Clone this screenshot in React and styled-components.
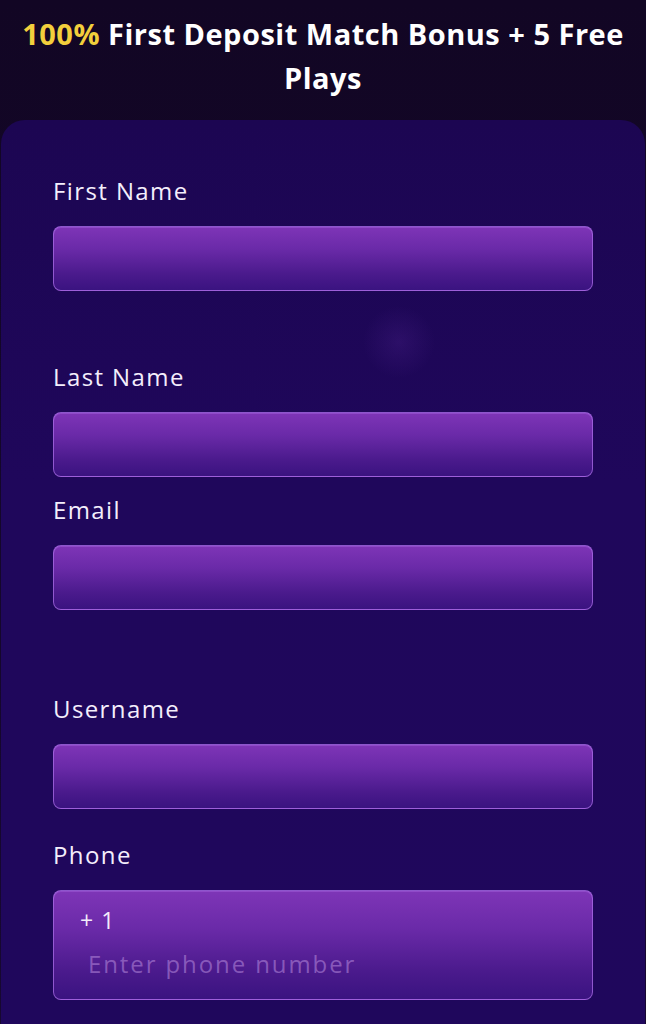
import React from "react";
import styled, { createGlobalStyle } from "styled-components";

const Global = createGlobalStyle`
  html, body { margin: 0; padding: 0; background: #130727; }
  body { font-family: "Open Sans", "Noto Sans", sans-serif; -webkit-font-smoothing: antialiased; }
  * { box-sizing: border-box; }
`;

const Page = styled.div`
  width: 646px;
  height: 1024px;
  overflow: hidden;
  background: linear-gradient(180deg, #120624 0%, #170831 100%);
  display: flex;
  flex-direction: column;
`;

const Heading = styled.h1`
  margin: 0;
  padding: 12px 10px 0;
  height: 120px;
  text-align: center;
  color: #ffffff;
  font-family: "Open Sans", sans-serif;
  font-weight: 700;
  font-size: 29px;
  line-height: 44px;
  letter-spacing: 0.5px;
`;

const Accent = styled.span`
  color: #f2cf3c;
`;

const Card = styled.section`
  flex: 1;
  margin: 0 1px;
  border-radius: 24px 24px 0 0;
  background:
    radial-gradient(circle at 398px 222px, rgba(120, 60, 190, 0.16) 0, rgba(120, 60, 190, 0) 36px),
    linear-gradient(180deg, #1c0652 0%, #1f075b 40%, #1f075c 100%);
  padding: 54px 52px 0 52px;
  display: flex;
  flex-direction: column;
`;

const Field = styled.div`
  display: flex;
  flex-direction: column;
  margin-bottom: ${(p) => p.$after}px;
`;

const Label = styled.label`
  color: #f4eefc;
  font-family: "Open Sans", sans-serif;
  font-weight: 500;
  font-size: 24px;
  line-height: 33px;
  letter-spacing: 1.4px;
  margin-bottom: 19px;
`;

const InputBox = styled.div`
  height: ${(p) => p.$h}px;
  border-radius: 8px;
  border: 1px solid rgba(170, 110, 230, 0.75);
  background: linear-gradient(180deg, #7e35b7 0%, #6a2aa8 35%, #4a1a8c 75%, #3a1380 100%);
  box-shadow: inset 0 1px 0 rgba(200, 140, 255, 0.25);
  display: flex;
  flex-direction: column;
  justify-content: center;
  padding: 0 26px;
`;

const Prefix = styled.span`
  color: #f3ecfb;
  font-size: 23px;
  line-height: 32px;
  letter-spacing: 1px;
  margin-bottom: 12px;
`;

const Placeholder = styled.span`
  color: rgba(175, 130, 215, 0.6);
  font-size: 24px;
  line-height: 32px;
  padding-left: 8px;
  letter-spacing: 1.9px;
  margin-bottom: 6px;
`;

const fields = [
  { label: "First Name", after: 69 },
  { label: "Last Name", after: 16 },
  { label: "Email", after: 82 },
  { label: "Username", after: 29 },
];

export default function App() {
  return (
    <Page>
      <Global />
      <Heading>
        <Accent>100%</Accent> First Deposit Match Bonus + 5 Free Plays
      </Heading>
      <Card>
        {fields.map((f) => (
          <Field key={f.label} $after={f.after}>
            <Label>{f.label}</Label>
            <InputBox $h={65} />
          </Field>
        ))}
        <Field $after={0}>
          <Label>Phone</Label>
          <InputBox $h={110}>
            <Prefix>+ 1</Prefix>
            <Placeholder>Enter phone number</Placeholder>
          </InputBox>
        </Field>
      </Card>
    </Page>
  );
}
